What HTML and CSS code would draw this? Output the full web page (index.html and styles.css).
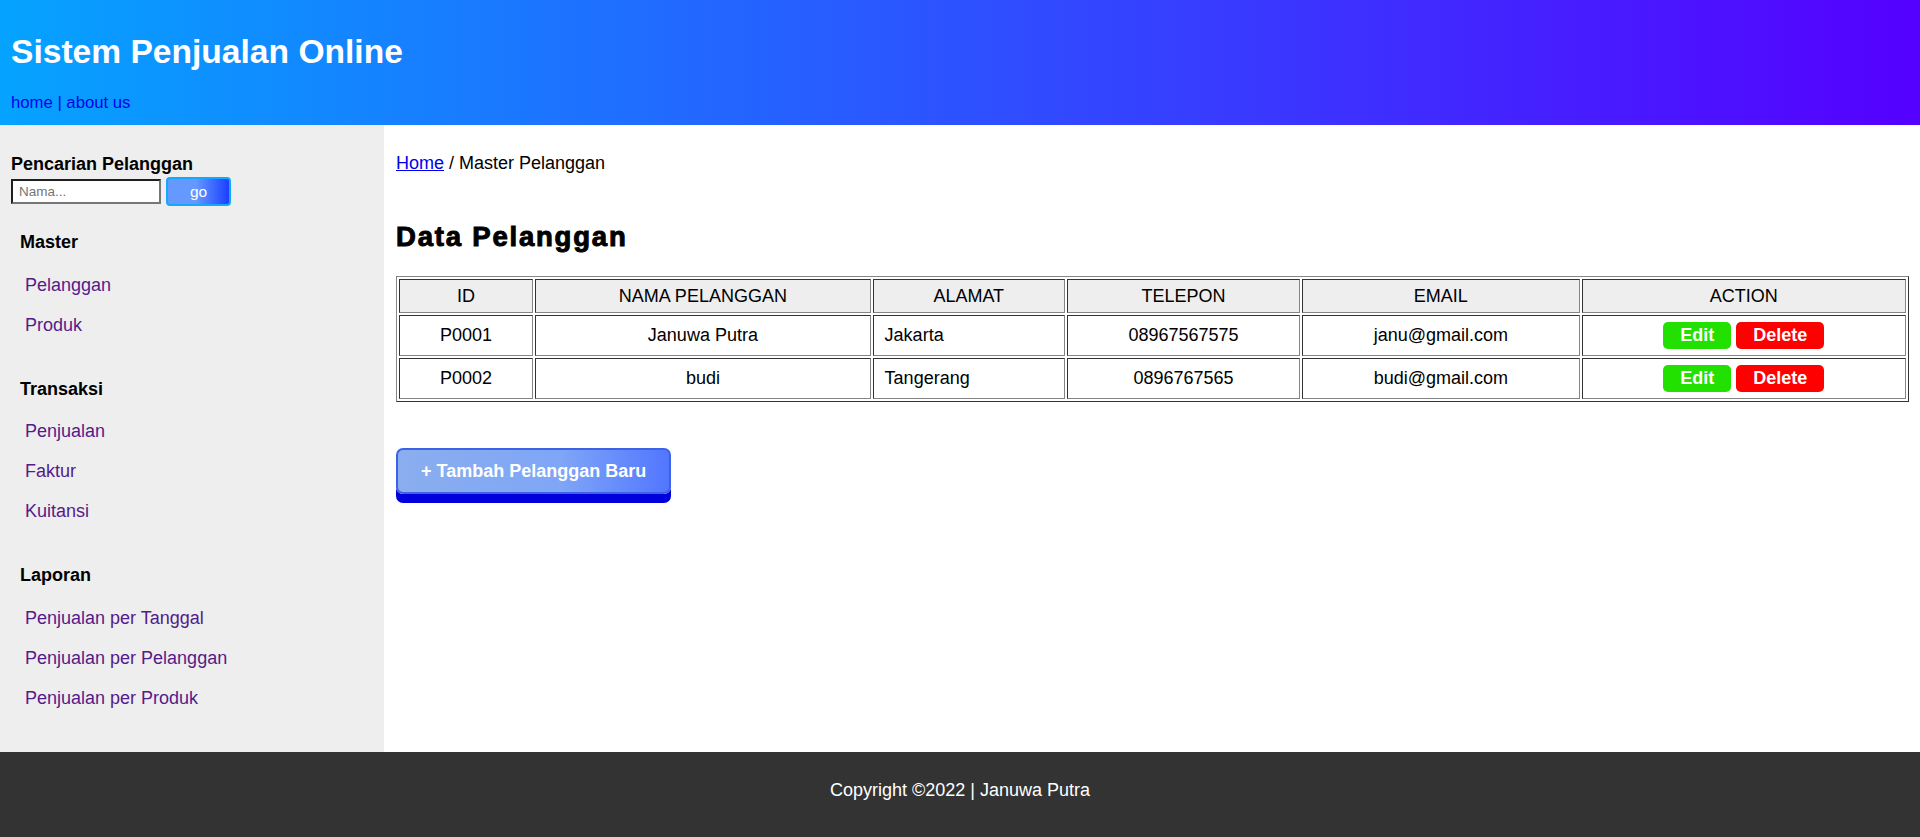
FILE: index.html
```html
<!DOCTYPE html>
<html lang="id">
<head>
<meta charset="utf-8">
<title>Sistem Penjualan Online</title>
<link rel="stylesheet" href="styles.css">
</head>
<body>
<header class="site-header">
  <h1 class="site-title">Sistem Penjualan Online</h1>
  <nav class="top-nav"><a href="#">home</a> | <a href="#">about us</a></nav>
</header>
<div class="layout">
  <aside class="sidebar">
    <div class="search-title">Pencarian Pelanggan</div>
    <form class="search-form">
      <input class="search-input" type="text" placeholder="Nama...">
      <button class="search-btn" type="button">go</button>
    </form>
    <div class="menu-section">
      <h4 class="menu-heading">Master</h4>
      <ul class="menu-list">
        <li><a class="menu-link" href="#">Pelanggan</a></li>
        <li><a class="menu-link" href="#">Produk</a></li>
      </ul>
    </div>
    <div class="menu-section">
      <h4 class="menu-heading">Transaksi</h4>
      <ul class="menu-list">
        <li><a class="menu-link" href="#">Penjualan</a></li>
        <li><a class="menu-link" href="#">Faktur</a></li>
        <li><a class="menu-link" href="#">Kuitansi</a></li>
      </ul>
    </div>
    <div class="menu-section">
      <h4 class="menu-heading">Laporan</h4>
      <ul class="menu-list">
        <li><a class="menu-link" href="#">Penjualan per Tanggal</a></li>
        <li><a class="menu-link" href="#">Penjualan per Pelanggan</a></li>
        <li><a class="menu-link" href="#">Penjualan per Produk</a></li>
      </ul>
    </div>
  </aside>
  <main class="main">
    <div class="breadcrumb"><a href="#">Home</a> / Master Pelanggan</div>
    <h2 class="page-title">Data Pelanggan</h2>
    <table class="data-table">
      <thead>
        <tr>
          <th class="col-id">ID</th>
          <th class="col-nama">NAMA PELANGGAN</th>
          <th class="col-alamat">ALAMAT</th>
          <th class="col-telepon">TELEPON</th>
          <th class="col-email">EMAIL</th>
          <th class="col-action">ACTION</th>
        </tr>
      </thead>
      <tbody>
        <tr>
          <td class="cell-center">P0001</td>
          <td class="cell-center">Januwa Putra</td>
          <td class="cell-left">Jakarta</td>
          <td class="cell-center">08967567575</td>
          <td class="cell-center">janu@gmail.com</td>
          <td class="cell-center"><a class="btn btn-edit" href="#">Edit</a> <a class="btn btn-delete" href="#">Delete</a></td>
        </tr>
        <tr>
          <td class="cell-center">P0002</td>
          <td class="cell-center">budi</td>
          <td class="cell-left">Tangerang</td>
          <td class="cell-center">0896767565</td>
          <td class="cell-center">budi@gmail.com</td>
          <td class="cell-center"><a class="btn btn-edit" href="#">Edit</a> <a class="btn btn-delete" href="#">Delete</a></td>
        </tr>
      </tbody>
    </table>
    <div class="actions-bar">
      <a class="add-btn" href="#">+ Tambah Pelanggan Baru</a>
    </div>
  </main>
</div>
<footer class="site-footer">Copyright ©2022 | Januwa Putra</footer>
</body>
</html>
```

FILE: styles.css
```css
* {
  box-sizing: border-box;
}

html,
body {
  margin: 0;
  padding: 0;
}

body {
  font-family: "Liberation Sans", Arial, sans-serif;
  font-size: 18px;
  color: #000;
  background: #fff;
}

/* Header */
.site-header {
  height: 125px;
  padding: 32px 11px 0;
  background: linear-gradient(to right, #05a3ff, #5500ff);
}

.site-title {
  margin: 0;
  font-size: 33.6px;
  line-height: 39px;
  font-weight: bold;
  color: #fff;
}

.top-nav {
  margin-top: 22px;
  font-size: 16.7px;
  line-height: 20px;
  color: #0000ee;
}

.top-nav a {
  color: #0000ee;
  text-decoration: none;
}

/* Layout */
.layout {
  display: flex;
}

.sidebar {
  flex: none;
  width: 384px;
  background: #eeeeee;
  padding: 29px 11px 34px;
}

.search-title {
  font-weight: bold;
  line-height: 21px;
}

.search-form {
  display: flex;
  align-items: center;
  gap: 5px;
  height: 29px;
  margin: 2px 0 0;
}

.search-input {
  width: 150px;
  height: 25px;
  padding: 0 6px;
  border: 2px solid;
  border-color: #1f1f1f #767676 #767676 #1f1f1f;
  background: #fff;
  font-family: inherit;
  font-size: 13.5px;
  color: #000;
}

.search-input::placeholder {
  color: #757575;
}

.search-btn {
  width: 65px;
  height: 29px;
  padding: 0;
  border: 2px solid #14a9ff;
  border-radius: 4px;
  background: linear-gradient(to right, #6699ff 45%, #1a40ff);
  color: #fff;
  font-family: inherit;
  font-size: 15.5px;
}

.menu-section {
  margin-top: 26px;
}

.menu-section + .menu-section {
  margin-top: 34px;
}

.menu-heading {
  margin: 0;
  padding-left: 9px;
  font-size: 18px;
  line-height: 21px;
  font-weight: bold;
}

.menu-list {
  list-style: none;
  margin: 11.5px 0 0;
  padding: 0;
}

.menu-link {
  display: block;
  padding: 9px 0 9px 14px;
  line-height: 22px;
  font-size: 18px;
  color: #551a8b;
  text-decoration: none;
}

/* Main */
.main {
  flex: 1;
  min-width: 0;
  padding: 28px 11px 0 12px;
}

.breadcrumb {
  line-height: 21px;
}

.breadcrumb a {
  color: #0000ee;
  text-decoration: underline;
}

.page-title {
  margin: 47px 0 0;
  font-size: 27.5px;
  line-height: 31px;
  font-weight: bold;
  letter-spacing: 1.8px;
  -webkit-text-stroke: 1px #000;
}

.data-table {
  width: 100%;
  margin-top: 24px;
  table-layout: fixed;
  border: 1px solid;
  border-color: #858585 #333 #333 #858585;
  border-spacing: 2px;
}

.data-table th,
.data-table td {
  padding: 0;
  border: 1px solid;
  border-color: #333 #858585 #858585 #333;
  font-size: 18px;
  vertical-align: middle;
}

.data-table th {
  height: 34px;
  background: #eeeeee;
  font-weight: normal;
  text-align: center;
}

.data-table td {
  height: 41px;
  background: #fff;
}

.col-id { width: 134px; }
.col-nama { width: 335px; }
.col-alamat { width: 192px; }
.col-telepon { width: 233px; }
.col-email { width: 277px; }
.col-action { width: 324px; }

.cell-center {
  text-align: center;
}

.data-table .cell-left {
  text-align: left;
  padding-left: 11px;
}

.btn {
  display: inline-block;
  padding: 3px 17px;
  border-radius: 5px;
  font-size: 18px;
  line-height: 21px;
  font-weight: bold;
  color: #fff;
  text-decoration: none;
}

.btn-edit {
  background: #22e000;
}

.btn-delete {
  background: #ff0000;
}

.actions-bar {
  display: flex;
  margin-top: 46px;
}

.add-btn {
  display: block;
  padding: 10.5px 23px;
  border: 2px solid #3e62e4;
  border-radius: 7px;
  background: linear-gradient(to right, #8aaeee, #7fa6f7 60%, #5276ff);
  box-shadow: 0 9px 0 #0000dd;
  font-size: 18px;
  line-height: 21px;
  font-weight: bold;
  color: #fff;
  text-decoration: none;
}

/* Footer */
.site-footer {
  height: 86px;
  padding-top: 28px;
  background: #333333;
  color: #fff;
  text-align: center;
  font-size: 18px;
  line-height: 21px;
}
```
